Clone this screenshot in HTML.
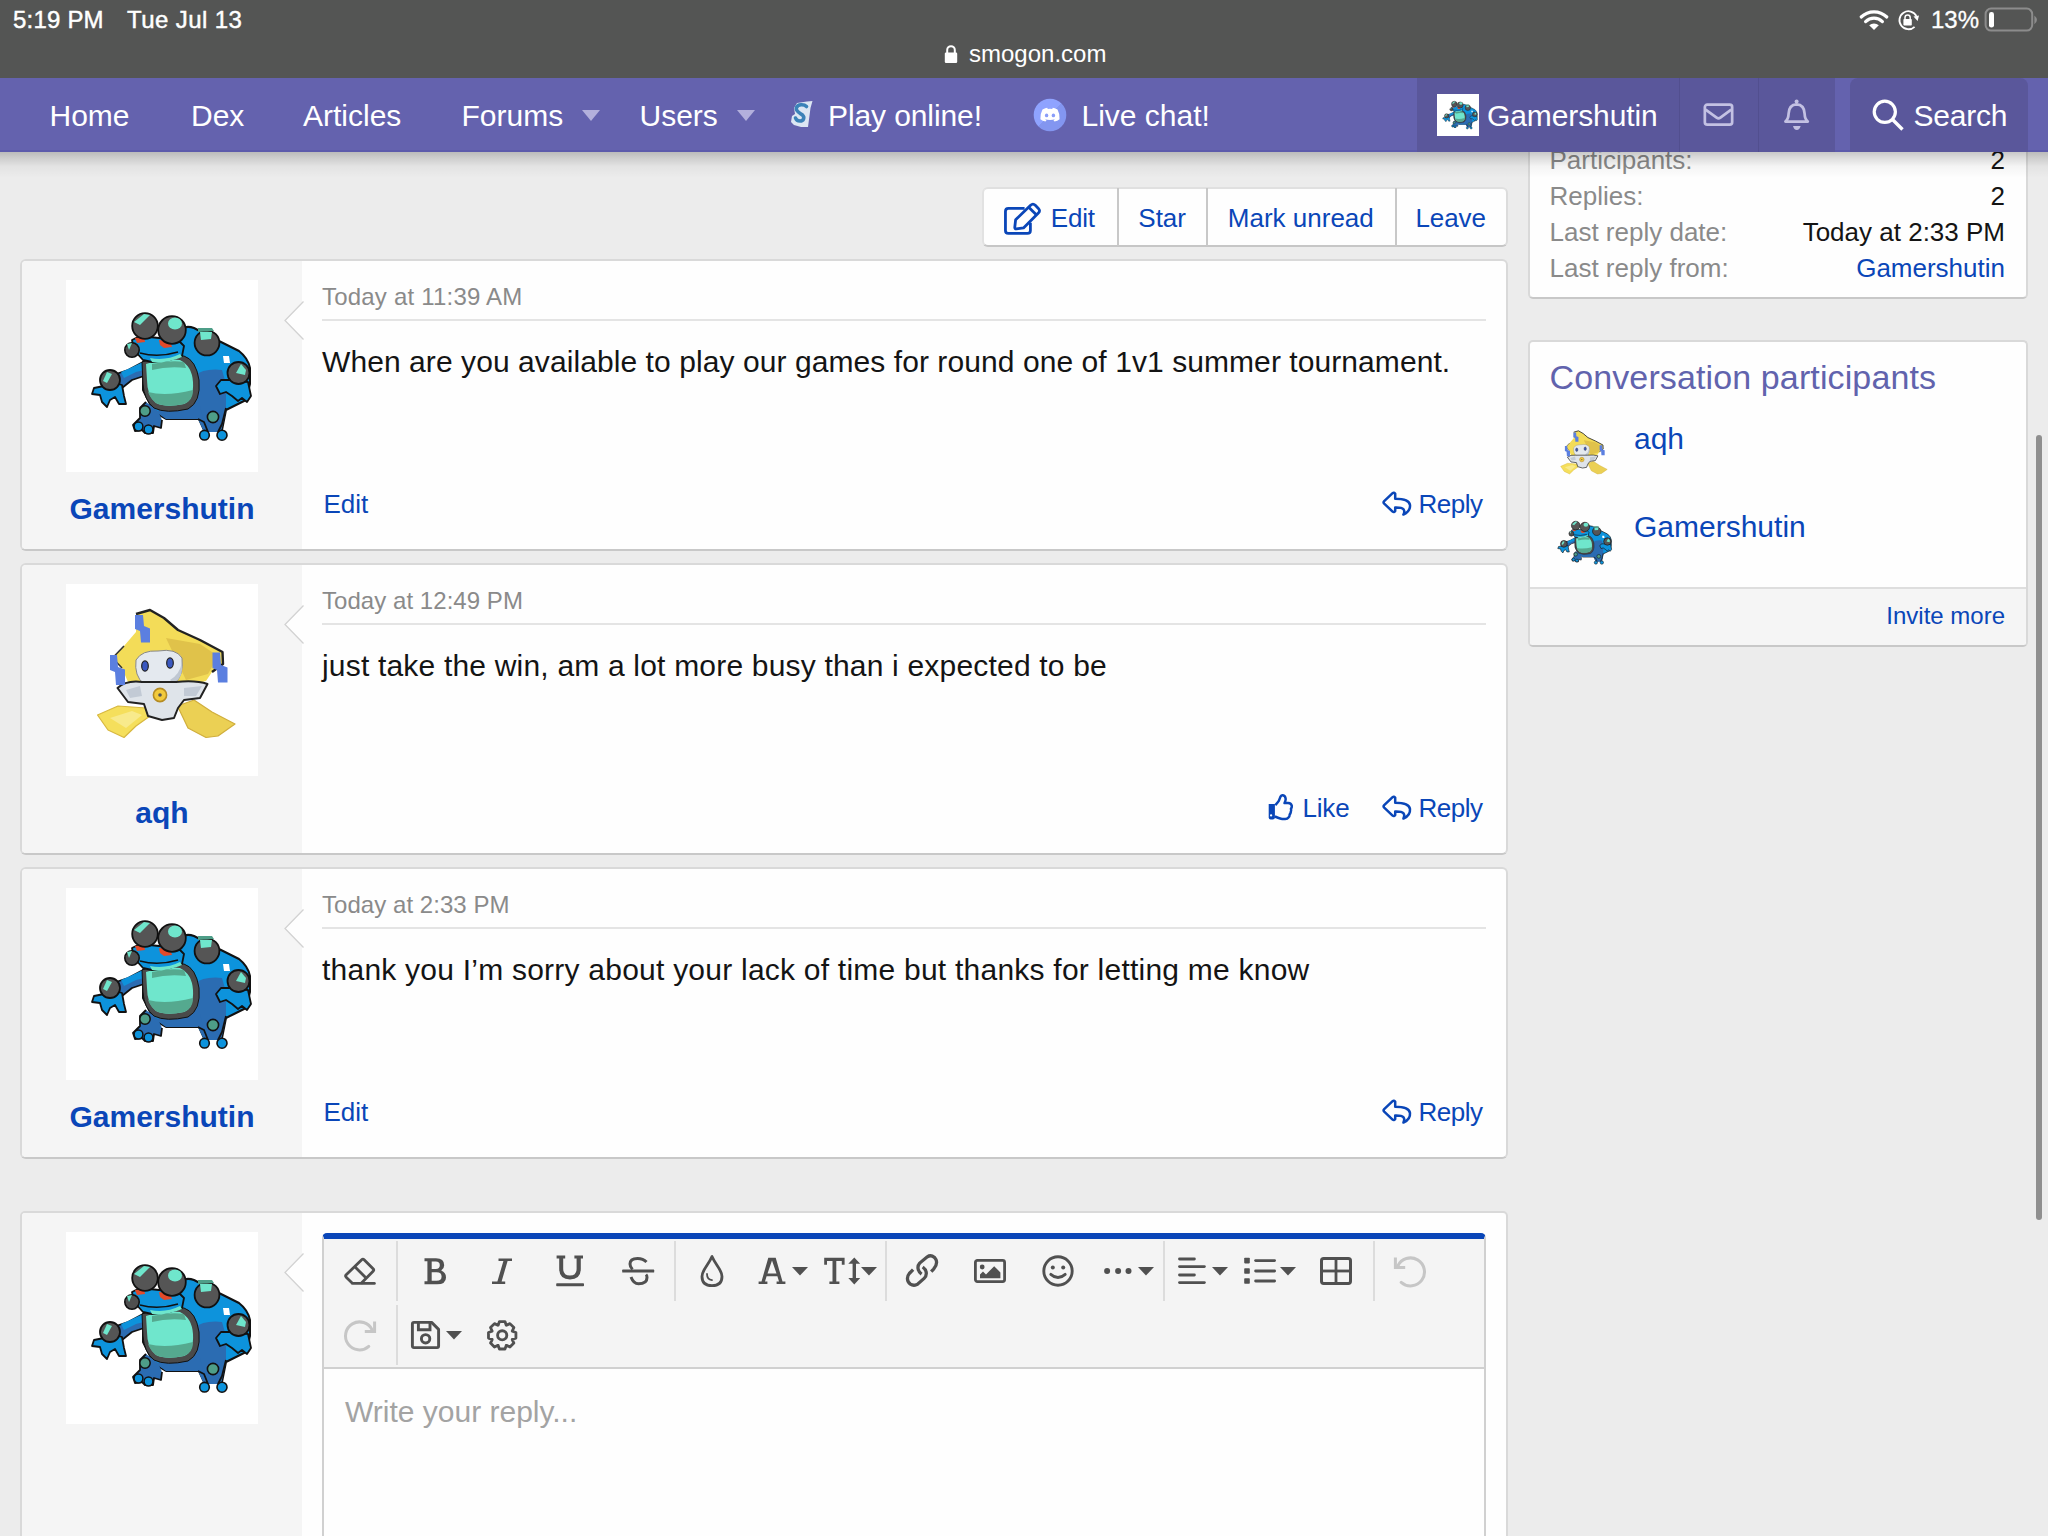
<!DOCTYPE html>
<html><head><meta charset="utf-8"><title>smogon.com</title>
<style>
html,body{margin:0;padding:0;}
body{width:2048px;height:1536px;overflow:hidden;position:relative;background:#ececec;font-family:"Liberation Sans",sans-serif;}
.t{position:absolute;line-height:1;white-space:nowrap;}
svg{overflow:visible}
</style></head><body>
<div style="position:absolute;left:982px;top:187px;width:526px;height:60px;background:#fefefe;border:2px solid #dcdcdc;border-top-color:#e0e0e0;border-left-color:#e2e2e2;border-bottom-color:#c6c6c6;border-radius:6px;box-sizing:border-box"></div>
<div style="position:absolute;left:1117px;top:188px;width:2px;height:58px;background:#c8c8c8"></div>
<div style="position:absolute;left:1206px;top:188px;width:2px;height:58px;background:#c8c8c8"></div>
<div style="position:absolute;left:1395px;top:188px;width:2px;height:58px;background:#c8c8c8"></div>
<svg style="position:absolute;left:1004px;top:203px;" width="37" height="33" viewBox="0 0 37 33"><path d="M20.6 5.4 H4.4 Q1.45 5.4 1.45 8.4 V27.4 Q1.45 30.4 4.4 30.4 H23.4 Q26.4 30.4 26.4 27.4 V19.8" fill="none" stroke="#0a46b8" stroke-width="2.8"/><path d="M11.6 16.8 L26.6 2.2 Q29 0 31.3 2.3 L34.4 5.4 Q36.7 7.8 34.4 10 L19.5 24.9 L12.4 25.9 Q10.6 26 10.8 24.1 Z" fill="none" stroke="#0a46b8" stroke-width="2.8" stroke-linejoin="round"/><path d="M24.7 4.2 L32.6 12.1" stroke="#0a46b8" stroke-width="2.8"/></svg>
<div class="t" style="left:1050.8px;top:205.0px;font-size:26px;color:#0a46b8;letter-spacing:-0.2px;">Edit</div>
<div class="t" style="left:1138.3px;top:205.0px;font-size:26px;color:#0a46b8;">Star</div>
<div class="t" style="left:1227.8px;top:205.0px;font-size:26px;color:#0a46b8;">Mark unread</div>
<div class="t" style="left:1415.5px;top:205.0px;font-size:26px;color:#0a46b8;letter-spacing:-0.1px;">Leave</div>
<div style="position:absolute;left:20px;top:259px;width:1488px;height:292px;background:#fefefe;border:2px solid #d9d9d9;border-bottom-color:#c8c8c8;border-radius:6px;box-sizing:border-box"></div>
<div style="position:absolute;left:22px;top:261px;width:280px;height:288px;background:#f5f5f5;border-radius:4px 0 0 4px"></div>
<div style="position:absolute;left:66px;top:280px;width:192px;height:192px;background:#fff"></div>
<svg style="position:absolute;left:66px;top:280px" width="192" height="192" viewBox="0 0 192 192"><use href="#toad"/></svg>
<div class="t" style="left:162px;transform:translateX(-50%);top:493.9px;font-size:30px;color:#0a46b8;font-weight:bold;">Gamershutin</div>
<svg style="position:absolute;left:284px;top:301px;" width="20" height="40" viewBox="0 0 20 40"><path d="M20 0 L1 19.5 L20 39 Z" fill="#fefefe"/><path d="M19.5 0.5 L1 19.5 L19.5 38.5" fill="none" stroke="#d2d2d2" stroke-width="1.3"/></svg>
<div class="t" style="left:322px;top:284.6px;font-size:24px;color:#8a8a8a;letter-spacing:0.2px;">Today at 11:39 AM</div>
<div style="position:absolute;left:322px;top:319px;width:1164px;height:2px;background:#e4e4e4"></div>
<div class="t" style="left:322px;top:347.4px;font-size:30px;color:#141414;letter-spacing:0.075px;">When are you available to play our games for round one of 1v1 summer tournament.</div>
<div class="t" style="left:323.5px;top:490.7px;font-size:26px;color:#0a46b8;">Edit</div>
<svg style="position:absolute;left:1382px;top:491px;" width="31" height="27" viewBox="0 0 31 27"><path d="M13.2 2.8 Q12 1 10.6 2.2 L2.2 10.2 Q1 11.4 2.2 12.6 L10.6 20.6 Q12 21.8 13.2 20 V16.6 Q19.6 16.4 21.6 18.4 Q23 20.6 21.4 23.6 Q28.6 20.2 28 14 Q27 7.8 13.2 7.8 Z" fill="none" stroke="#0a46b8" stroke-width="2.5" stroke-linejoin="round"/></svg>
<div class="t" style="left:1418.5px;top:490.7px;font-size:26px;color:#0a46b8;letter-spacing:-0.5px;">Reply</div>
<div style="position:absolute;left:20px;top:563px;width:1488px;height:292px;background:#fefefe;border:2px solid #d9d9d9;border-bottom-color:#c8c8c8;border-radius:6px;box-sizing:border-box"></div>
<div style="position:absolute;left:22px;top:565px;width:280px;height:288px;background:#f5f5f5;border-radius:4px 0 0 4px"></div>
<div style="position:absolute;left:66px;top:584px;width:192px;height:192px;background:#fff"></div>
<svg style="position:absolute;left:66px;top:584px" width="192" height="192" viewBox="0 0 192 192"><use href="#jira"/></svg>
<div class="t" style="left:162px;transform:translateX(-50%);top:797.9px;font-size:30px;color:#0a46b8;font-weight:bold;">aqh</div>
<svg style="position:absolute;left:284px;top:605px;" width="20" height="40" viewBox="0 0 20 40"><path d="M20 0 L1 19.5 L20 39 Z" fill="#fefefe"/><path d="M19.5 0.5 L1 19.5 L19.5 38.5" fill="none" stroke="#d2d2d2" stroke-width="1.3"/></svg>
<div class="t" style="left:322px;top:588.6px;font-size:24px;color:#8a8a8a;letter-spacing:0.05px;">Today at 12:49 PM</div>
<div style="position:absolute;left:322px;top:623px;width:1164px;height:2px;background:#e4e4e4"></div>
<div class="t" style="left:322px;top:651.4px;font-size:30px;color:#141414;letter-spacing:0.19px;">just take the win, am a lot more busy than i expected to be</div>
<svg style="position:absolute;left:1267px;top:794px;" width="27" height="28" viewBox="0 0 27 28"><path d="M1.7 10.1 H7.9 V23.4 Q7.9 25.4 5.8 25.4 H3.6 Q1.7 25.4 1.7 23.4 Z" fill="#0a46b8"/><circle cx="4.1" cy="21.4" r="1.15" fill="#fff"/><path d="M8.3 11.1 Q10.4 9 11.8 6.9 L13.5 2.6 Q14.4 1 15.8 1.2 Q18.4 1.6 18.7 5 Q18.6 7 17.5 9.1 H21.2 Q24.2 9.4 24.8 11.8 Q25 13.6 23.9 14.8 Q24.6 16.4 23.9 17.5 Q23.6 19.6 22.7 20.5 Q22.6 22.6 21.7 23.2 Q20.4 24.9 18.2 24.9 Q15.4 25 14 24.7 Q11 24 7.85 22.5" fill="none" stroke="#0a46b8" stroke-width="2.5" stroke-linejoin="round"/></svg>
<div class="t" style="left:1302.5px;top:794.7px;font-size:26px;color:#0a46b8;letter-spacing:-0.2px;">Like</div>
<svg style="position:absolute;left:1382px;top:795px;" width="31" height="27" viewBox="0 0 31 27"><path d="M13.2 2.8 Q12 1 10.6 2.2 L2.2 10.2 Q1 11.4 2.2 12.6 L10.6 20.6 Q12 21.8 13.2 20 V16.6 Q19.6 16.4 21.6 18.4 Q23 20.6 21.4 23.6 Q28.6 20.2 28 14 Q27 7.8 13.2 7.8 Z" fill="none" stroke="#0a46b8" stroke-width="2.5" stroke-linejoin="round"/></svg>
<div class="t" style="left:1418.5px;top:794.7px;font-size:26px;color:#0a46b8;letter-spacing:-0.5px;">Reply</div>
<div style="position:absolute;left:20px;top:867px;width:1488px;height:292px;background:#fefefe;border:2px solid #d9d9d9;border-bottom-color:#c8c8c8;border-radius:6px;box-sizing:border-box"></div>
<div style="position:absolute;left:22px;top:869px;width:280px;height:288px;background:#f5f5f5;border-radius:4px 0 0 4px"></div>
<div style="position:absolute;left:66px;top:888px;width:192px;height:192px;background:#fff"></div>
<svg style="position:absolute;left:66px;top:888px" width="192" height="192" viewBox="0 0 192 192"><use href="#toad"/></svg>
<div class="t" style="left:162px;transform:translateX(-50%);top:1101.9px;font-size:30px;color:#0a46b8;font-weight:bold;">Gamershutin</div>
<svg style="position:absolute;left:284px;top:909px;" width="20" height="40" viewBox="0 0 20 40"><path d="M20 0 L1 19.5 L20 39 Z" fill="#fefefe"/><path d="M19.5 0.5 L1 19.5 L19.5 38.5" fill="none" stroke="#d2d2d2" stroke-width="1.3"/></svg>
<div class="t" style="left:322px;top:892.6px;font-size:24px;color:#8a8a8a;letter-spacing:0.05px;">Today at 2:33 PM</div>
<div style="position:absolute;left:322px;top:927px;width:1164px;height:2px;background:#e4e4e4"></div>
<div class="t" style="left:322px;top:955.4px;font-size:30px;color:#141414;letter-spacing:0.23px;">thank you I&#8217;m sorry about your lack of time but thanks for letting me know</div>
<div class="t" style="left:323.5px;top:1098.7px;font-size:26px;color:#0a46b8;">Edit</div>
<svg style="position:absolute;left:1382px;top:1099px;" width="31" height="27" viewBox="0 0 31 27"><path d="M13.2 2.8 Q12 1 10.6 2.2 L2.2 10.2 Q1 11.4 2.2 12.6 L10.6 20.6 Q12 21.8 13.2 20 V16.6 Q19.6 16.4 21.6 18.4 Q23 20.6 21.4 23.6 Q28.6 20.2 28 14 Q27 7.8 13.2 7.8 Z" fill="none" stroke="#0a46b8" stroke-width="2.5" stroke-linejoin="round"/></svg>
<div class="t" style="left:1418.5px;top:1098.7px;font-size:26px;color:#0a46b8;letter-spacing:-0.5px;">Reply</div>
<div style="position:absolute;left:20px;top:1211px;width:1488px;height:400px;background:#fefefe;border:2px solid #d9d9d9;border-radius:5px;box-sizing:border-box"></div>
<div style="position:absolute;left:22px;top:1213px;width:280px;height:400px;background:#f5f5f5;border-radius:3px 0 0 0"></div>
<div style="position:absolute;left:66px;top:1232px;width:192px;height:192px;background:#fff"></div>
<svg style="position:absolute;left:66px;top:1232px" width="192" height="192" viewBox="0 0 192 192"><use href="#toad"/></svg>
<svg style="position:absolute;left:284px;top:1253px;" width="20" height="40" viewBox="0 0 20 40"><path d="M20 0 L1 19.5 L20 39 Z" fill="#fefefe"/><path d="M19.5 0.5 L1 19.5 L19.5 38.5" fill="none" stroke="#d2d2d2" stroke-width="1.3"/></svg>
<div style="position:absolute;left:322px;top:1233px;width:1164px;height:320px;background:#f4f4f4;border:2px solid #d0d0d0;border-top:6px solid #0a46b8;border-radius:5px 5px 0 0;box-sizing:border-box"></div>
<div style="position:absolute;left:324px;top:1369px;width:1160px;height:200px;background:#fefefe"></div>
<div style="position:absolute;left:324px;top:1367px;width:1160px;height:2px;background:#d0d0d0"></div>
<div style="position:absolute;left:396px;top:1241px;width:2px;height:60px;background:#dcdcdc"></div>
<div style="position:absolute;left:674px;top:1241px;width:2px;height:60px;background:#dcdcdc"></div>
<div style="position:absolute;left:885px;top:1241px;width:2px;height:60px;background:#dcdcdc"></div>
<div style="position:absolute;left:1163px;top:1241px;width:2px;height:60px;background:#dcdcdc"></div>
<div style="position:absolute;left:1373px;top:1241px;width:2px;height:60px;background:#dcdcdc"></div>
<div style="position:absolute;left:396px;top:1305px;width:2px;height:60px;background:#dcdcdc"></div>
<div class="t" style="left:345px;top:1396.9px;font-size:30px;color:#a3a3a3;">Write your reply...</div>
<svg style="position:absolute;left:343px;top:1256px;" width="34" height="30" viewBox="0 0 34 30"><path d="M9.6 27.4 L3.2 21.2 Q2 20 3.2 18.8 L18.7 3.7 Q19.9 2.5 21.1 3.7 L30.1 12.8 Q31.3 14 30.1 15.2 L18 27.4" fill="none" stroke="#505050" stroke-width="2.8" stroke-linejoin="round"/><path d="M9.6 27.4 H31.4" stroke="#505050" stroke-width="2.8" stroke-linecap="round"/><path d="M12.1 11 L22.6 21.5" stroke="#505050" stroke-width="2.8"/></svg>
<svg style="position:absolute;left:423px;top:1256px;" width="25" height="30" viewBox="0 0 25 30"><path d="M1.5 2.2 H13 Q21.2 2.2 21.2 9.2 Q21.2 12.6 18.2 14.5 Q23 16.4 23 21.4 Q23 28.2 14 28.2 H1.5 V25.2 H4.4 V5.2 H1.5 Z M8.7 5.6 V12.9 H12.8 Q16.8 12.9 16.8 9.2 Q16.8 5.6 12.8 5.6 Z M8.7 16.2 V24.8 H13.6 Q18.6 24.8 18.6 20.5 Q18.6 16.2 13.6 16.2 Z" fill="#505050" fill-rule="evenodd"/></svg>
<svg style="position:absolute;left:491px;top:1256px;" width="23" height="30" viewBox="0 0 23 30"><path d="M7.5 2.4 H21 V5 H16.6 L10.6 25.4 H14.2 V28 H1 V25.4 H6.4 L12.4 5 H7.5 Z" fill="#505050"/></svg>
<svg style="position:absolute;left:555px;top:1254px;" width="31" height="34" viewBox="0 0 31 34"><path d="M1.6 1.6 H10.2 V4.4 H8.2 V14.8 Q8.2 21.6 15 21.6 Q21.6 21.6 21.6 14.8 V4.4 H19.4 V1.6 H28 V4.4 H25.8 V14.8 Q25.8 25.4 15 25.4 Q4.2 25.4 4.2 14.8 V4.4 H1.6 Z" fill="#505050"/><rect x="1.2" y="29.2" width="27.8" height="3" rx="0.8" fill="#505050"/></svg>
<svg style="position:absolute;left:621px;top:1256px;" width="34" height="30" viewBox="0 0 34 30"><path d="M25.5 6 Q22 2.4 16.6 2.4 Q9 2.4 9 8 Q9 11 11.5 13.5" fill="none" stroke="#505050" stroke-width="3"/><path d="M10 21 Q12.5 27.8 17.5 27.8 Q26 27.8 26 21.5 Q26 19.5 25 18.5" fill="none" stroke="#505050" stroke-width="3"/><rect x="1.2" y="13.6" width="32" height="3" rx="0.6" fill="#505050"/></svg>
<svg style="position:absolute;left:700px;top:1254px;" width="24" height="34" viewBox="0 0 24 34"><path d="M12 2.5 Q10.5 6 7 11.2 Q2 18.5 2 22.4 Q2 31.6 12 31.6 Q22 31.6 22 22.4 Q22 18.5 17 11.2 Q13.5 6 12 2.5 Z" fill="none" stroke="#505050" stroke-width="2.8" stroke-linejoin="round"/><path d="M7 20 Q7 25.5 12 26.2" fill="none" stroke="#505050" stroke-width="1.8" stroke-linecap="round"/></svg>
<svg style="position:absolute;left:757px;top:1256px;" width="30" height="30" viewBox="0 0 30 30"><path d="M11.3 1.8 H18.7 L25.5 25.4 H28.4 V28 H19.6 V25.4 H22 L20.4 20.3 H9.6 L8 25.4 H10.4 V28 H1.6 V25.4 H4.5 Z M10.5 17.5 H19.5 L15 4.6 Z" fill="#505050" fill-rule="evenodd"/></svg>
<svg style="position:absolute;left:792px;top:1266.5px;" width="16" height="8.5" viewBox="0 0 16 8.5"><path d="M0 0 H16 L8.0 8.5 Z" fill="#505050"/></svg>
<svg style="position:absolute;left:823px;top:1256px;" width="38" height="30" viewBox="0 0 38 30"><path d="M1.2 1.8 H21.6 V8.8 H18.8 V5 H13.3 V25.4 H16.4 V28 H6.4 V25.4 H9.5 V5 H4 V8.8 H1.2 Z" fill="#505050"/><path d="M25.3 7.8 L31.3 1.6 L37.2 7.8 H33 V22 H37.2 L31.3 28.4 L25.3 22 H29.6 V7.8 Z" fill="#505050"/></svg>
<svg style="position:absolute;left:860.5px;top:1266.5px;" width="16" height="8.5" viewBox="0 0 16 8.5"><path d="M0 0 H16 L8.0 8.5 Z" fill="#505050"/></svg>
<svg style="position:absolute;left:905px;top:1254px;" width="34" height="34" viewBox="0 0 34 34"><path d="M16.6 20.1 C13 17.6 11.6 12.6 14.7 9.1 L22.3 2.8 C25.6 0.6 29.6 2.2 31 5.6 C32.2 8.6 31 12.4 28.6 15.1 L26.2 17.6" fill="none" stroke="#505050" stroke-width="3.3"/><path d="M8.1 15.7 L4.3 19.5 C1.6 22.6 1.8 27.6 5.4 30.2 C8.4 32.2 12.2 31.2 14.1 28.8 L19.1 24.4 C22.4 21.2 22 16 17.7 13" fill="none" stroke="#505050" stroke-width="3.3"/></svg>
<svg style="position:absolute;left:973px;top:1258px;" width="34" height="26" viewBox="0 0 34 26"><rect x="2.4" y="2.4" width="29.2" height="21.2" rx="2" fill="none" stroke="#505050" stroke-width="2.8"/><circle cx="9.2" cy="9" r="2.4" fill="#505050"/><path d="M7 20.2 V16.4 L10 13.4 L13 16.4 L21.2 8.2 L27.4 14.4 V20.2 Z" fill="#505050"/></svg>
<svg style="position:absolute;left:1041px;top:1254px;" width="34" height="34" viewBox="0 0 34 34"><circle cx="17" cy="17" r="14.2" fill="none" stroke="#505050" stroke-width="2.9"/><circle cx="11.8" cy="13.4" r="2" fill="#505050"/><circle cx="22.2" cy="13.4" r="2" fill="#505050"/><path d="M9.8 20.4 Q17 26.8 24.2 20.4" fill="none" stroke="#505050" stroke-width="2.9" stroke-linecap="round"/></svg>
<svg style="position:absolute;left:1103px;top:1267px;" width="30" height="8" viewBox="0 0 30 8"><circle cx="4.1" cy="4" r="3" fill="#505050"/><circle cx="15.1" cy="4" r="3" fill="#505050"/><circle cx="25.5" cy="4" r="3" fill="#505050"/></svg>
<svg style="position:absolute;left:1138px;top:1266.6px;" width="16" height="8.5" viewBox="0 0 16 8.5"><path d="M0 0 H16 L8.0 8.5 Z" fill="#505050"/></svg>
<svg style="position:absolute;left:1177px;top:1256px;" width="30" height="30" viewBox="0 0 30 30"><rect x="1.1" y="1.6" width="17.7" height="2.8" rx="1.4" fill="#505050"/><rect x="1.1" y="9.2" width="27.7" height="2.8" rx="1.4" fill="#505050"/><rect x="1.1" y="17.6" width="17.7" height="2.8" rx="1.4" fill="#505050"/><rect x="1.1" y="25.2" width="27.7" height="2.8" rx="1.4" fill="#505050"/></svg>
<svg style="position:absolute;left:1212px;top:1266.6px;" width="16" height="8.5" viewBox="0 0 16 8.5"><path d="M0 0 H16 L8.0 8.5 Z" fill="#505050"/></svg>
<svg style="position:absolute;left:1243px;top:1256px;" width="34" height="30" viewBox="0 0 34 30"><rect x="1.2" y="1.7999999999999998" width="5.6" height="5.6" rx="0.8" fill="#505050"/><rect x="11.2" y="3.1999999999999997" width="21.8" height="2.8" rx="1.4" fill="#505050"/><rect x="1.2" y="12.2" width="5.6" height="5.6" rx="0.8" fill="#505050"/><rect x="11.2" y="13.6" width="21.8" height="2.8" rx="1.4" fill="#505050"/><rect x="1.2" y="22.2" width="5.6" height="5.6" rx="0.8" fill="#505050"/><rect x="11.2" y="23.6" width="21.8" height="2.8" rx="1.4" fill="#505050"/></svg>
<svg style="position:absolute;left:1280.3px;top:1266.6px;" width="16" height="8.5" viewBox="0 0 16 8.5"><path d="M0 0 H16 L8.0 8.5 Z" fill="#505050"/></svg>
<svg style="position:absolute;left:1319px;top:1256px;" width="34" height="30" viewBox="0 0 34 30"><rect x="2.5" y="2.5" width="29" height="25" rx="2.2" fill="none" stroke="#505050" stroke-width="3"/><rect x="15.6" y="2.5" width="2.8" height="25" fill="#505050"/><rect x="2.5" y="13.6" width="29" height="2.8" fill="#505050"/></svg>
<svg style="position:absolute;left:1392px;top:1254px;" width="34" height="34" viewBox="0 0 34 34"><path d="M5.8 12 A14 14 0 1 1 9.2 28.4" fill="none" stroke="#c6c6c6" stroke-width="3" stroke-linecap="round"/><path d="M3.4 3.5 V13.4 H13.2" fill="none" stroke="#c6c6c6" stroke-width="3"/></svg>
<svg style="position:absolute;left:344px;top:1318px;" width="34" height="34" viewBox="0 0 34 34"><path d="M28.2 12 A14 14 0 1 0 24.8 28.4" fill="none" stroke="#c6c6c6" stroke-width="3" stroke-linecap="round"/><path d="M30.6 3.5 V13.4 H20.8" fill="none" stroke="#c6c6c6" stroke-width="3"/></svg>
<svg style="position:absolute;left:411px;top:1320px;" width="30" height="30" viewBox="0 0 30 30"><path d="M3 2.4 H20.6 L27.6 9.4 V26 Q27.6 27.6 26 27.6 H3 Q1.4 27.6 1.4 26 V4 Q1.4 2.4 3 2.4 Z" fill="none" stroke="#505050" stroke-width="2.9" stroke-linejoin="round"/><path d="M7.4 2.6 V9.8 H19 V2.6" fill="none" stroke="#505050" stroke-width="2.9"/><circle cx="14.6" cy="18.8" r="4.2" fill="none" stroke="#505050" stroke-width="2.9"/></svg>
<svg style="position:absolute;left:446px;top:1330.6px;" width="16" height="8.4" viewBox="0 0 16 8.4"><path d="M0 0 H16 L8.0 8.4 Z" fill="#505050"/></svg>
<svg style="position:absolute;left:487px;top:1320px;" width="31" height="31" viewBox="0 0 31 31"><path d="M28.92 12.52 L28.92 18.08 L25.32 19.34 L25.22 19.60 L26.87 23.04 L22.94 26.97 L19.50 25.32 L19.24 25.42 L17.98 29.02 L12.42 29.02 L11.16 25.42 L10.90 25.32 L7.46 26.97 L3.53 23.04 L5.18 19.60 L5.08 19.34 L1.48 18.08 L1.48 12.52 L5.08 11.26 L5.18 11.00 L3.53 7.56 L7.46 3.63 L10.90 5.28 L11.16 5.18 L12.42 1.58 L17.98 1.58 L19.24 5.18 L19.50 5.28 L22.94 3.63 L26.87 7.56 L25.22 11.00 L25.32 11.26 Z" fill="none" stroke="#505050" stroke-width="2.8" stroke-linejoin="round"/><circle cx="15.2" cy="15.3" r="4.6" fill="none" stroke="#505050" stroke-width="2.9"/></svg>
<div style="position:absolute;left:1528px;top:100px;width:500px;height:199px;background:#fefefe;border:2px solid #d9d9d9;border-bottom-color:#c8c8c8;border-radius:5px;box-sizing:border-box"></div>
<div class="t" style="left:1549.5px;top:147.0px;font-size:26px;color:#8a8a8a;">Participants:</div>
<div class="t" style="right:43px;top:147.0px;font-size:26px;color:#141414;">2</div>
<div class="t" style="left:1549.5px;top:183.0px;font-size:26px;color:#8a8a8a;">Replies:</div>
<div class="t" style="right:43px;top:183.0px;font-size:26px;color:#141414;">2</div>
<div class="t" style="left:1549.5px;top:219.0px;font-size:26px;color:#8a8a8a;">Last reply date:</div>
<div class="t" style="right:43px;top:219.0px;font-size:26px;color:#141414;">Today at 2:33 PM</div>
<div class="t" style="left:1549.5px;top:255.0px;font-size:26px;color:#8a8a8a;">Last reply from:</div>
<div class="t" style="right:43px;top:255.0px;font-size:26px;color:#0a46b8;">Gamershutin</div>
<div style="position:absolute;left:1528px;top:340px;width:500px;height:307px;background:#fefefe;border:2px solid #d9d9d9;border-bottom-color:#c8c8c8;border-radius:5px;box-sizing:border-box"></div>
<div style="position:absolute;left:1530px;top:587px;width:496px;height:58px;background:#f5f5f5;border-top:2px solid #dedede;box-sizing:border-box;border-radius:0 0 4px 4px"></div>
<div class="t" style="left:1549.5px;top:359.6px;font-size:34px;color:#6163ad;letter-spacing:0.12px;">Conversation participants</div>
<svg style="position:absolute;left:1550px;top:422px" width="65" height="65" viewBox="0 0 192 192"><use href="#jira"/></svg>
<div class="t" style="left:1634px;top:423.8px;font-size:30px;color:#0a46b8;">aqh</div>
<svg style="position:absolute;left:1548.6px;top:510px" width="65" height="65" viewBox="0 0 192 192"><use href="#toad"/></svg>
<div class="t" style="left:1634px;top:512.3px;font-size:30px;color:#0a46b8;">Gamershutin</div>
<div class="t" style="right:43px;top:603.7px;font-size:24px;color:#0a46b8;">Invite more</div>
<div style="position:absolute;left:2036px;top:435px;width:6px;height:785px;background:#8f8f8f;border-radius:3px"></div>
<svg width="0" height="0" style="position:absolute"><defs>
<g id="toad" stroke-linejoin="round">
 <!-- body right/back (light blue) -->
 <path d="M112 50 Q120 45 128 48 L153 61 L173 71 Q182 78 184 88 L184 104 L180 120 L168 126 L160 130 L156 150 L138 150 L133 139 L100 139 L88 132 L77 110 L77 82 L100 78 Z" fill="#0d93dc" stroke="#111" stroke-width="2"/>
 <!-- darker lower body -->
 <path d="M128 96 Q138 88 156 90 L160 104 L160 130 L155 152 L138 152 L132 139 L100 139 L90 132 L96 128 Q124 128 128 110 Z" fill="#2b6cb2"/>
 <!-- right hand fingers -->
 <path d="M150 106 L155 100 L168 100 L182 102 L185 116 L181 122 L176 118 L172 121 L166 116 L160 112 L154 114 Z" fill="#0d93dc" stroke="#111" stroke-width="1.8"/>
 <!-- left arm -->
 <path d="M77 82 L62 90 L50 94 L48 106 L56 108 L66 100 L78 96 Z" fill="#2b6cb2" stroke="#111" stroke-width="1.8"/>
 <path d="M77 82 L62 89 L55 92 L58 98 L70 92 L78 90 Z" fill="#0d93dc"/>
 <!-- left hand fingers -->
 <path d="M38 106 L28 108 L26 114 L34 115 L36 122 L41 127 L44 120 L49 117 L53 124 L60 124 L58 116 L56 105 L46 102 Z" fill="#0d93dc" stroke="#111" stroke-width="1.8"/>
 <!-- left leg + foot -->
 <path d="M80 122 L92 131 L96 140 L95 148 L88 146 L87 153 L79 153 L76 150 L69 151 L67 145 L74 138 L74 128 Z" fill="#2b6cb2"/><path d="M96 140 L95 148 L88 146 L87 153 L79 153 L76 150 L69 151 L67 145 L74 138 L74 128 L80 122" fill="none" stroke="#111" stroke-width="1.8"/>
 <circle cx="72.5" cy="146.5" r="4.4" fill="#0d93dc" stroke="#111" stroke-width="1.5"/>
 <circle cx="82.5" cy="149.5" r="4.4" fill="#0d93dc" stroke="#111" stroke-width="1.5"/>
 <circle cx="79" cy="131" r="5.2" fill="#4e9e88" stroke="#111" stroke-width="1.5"/>
 <!-- right leg + foot -->
 <path d="M134 126 L160 126 L156 144 L152 152 L142 152 L138 142 Z" fill="#2b6cb2"/><path d="M132 139 L138 142 L142 152 M160 128 L156 144 L152 152" fill="none" stroke="#111" stroke-width="1.8"/>
 <circle cx="138.5" cy="155.2" r="4.8" fill="#0d93dc" stroke="#111" stroke-width="1.6"/>
 <circle cx="156" cy="155.2" r="5" fill="#0d93dc" stroke="#111" stroke-width="1.6"/>
 <circle cx="147" cy="137" r="5.6" fill="#4e9e88" stroke="#111" stroke-width="1.6"/>
 <!-- belly -->
 <path d="M76 82 Q96 74 118 76 Q130 80 133 100 Q135 122 122 129 Q100 134 88 128 Q78 120 77 104 Z" fill="#4a4a4a" stroke="#111" stroke-width="1"/>
 <path d="M80 84 Q98 78 114 80 Q126 86 127 102 Q128 120 118 124 Q100 128 90 123 Q81 116 81 100 Z" fill="#6fe6cc"/>
 <path d="M82 112 Q100 117 127 110 Q127 121 118 124 Q100 128 90 123 Q84 118 82 112 Z" fill="#55a98f"/>
 <path d="M86 84 Q104 80 118 82 L120 88 Q102 86 86 90 Z" fill="#55a98f"/>
 <!-- head -->
 <path d="M66 60 L74 56 L112 60 L118 66 L116 76 L104 80 L86 82 L77 80 L68 70 Z" fill="#0d93dc" stroke="#111" stroke-width="1.8"/>
 <path d="M74 73 Q92 78 112 72" fill="none" stroke="#111" stroke-width="1.6"/>
 <path d="M84 78 Q100 81 114 74 L116 77 Q100 84 86 82 Z" fill="#6fe6cc"/>
 <path d="M69 58 L78 57 L79 62 L71 63 Z" fill="#e24a2a"/>
 <path d="M93 60 L104 61 L106 67 L98 68 L94 65 Z" fill="#e24a2a"/>
 <!-- bumps -->
 <circle cx="66" cy="70" r="7.2" fill="#4f4f4f" stroke="#111" stroke-width="1.6"/>
 <path d="M61 64 L66 63 L63 70 Z" fill="#6fe6cc"/>
 <circle cx="79" cy="46" r="12.8" fill="#555" stroke="#111" stroke-width="1.8"/>
 <path d="M68 42 L78 34 L84 35 L74 45 Z" fill="#6fe6cc"/>
 <circle cx="106" cy="50" r="13.8" fill="#555" stroke="#111" stroke-width="1.8"/>
 <ellipse cx="109" cy="43.5" rx="7" ry="6" fill="#6fe6cc"/>
 <circle cx="141" cy="63" r="12.4" fill="#555" stroke="#111" stroke-width="1.8"/>
 <path d="M134 52 L146 52 L145 59 L135 60 Z" fill="#6fe6cc"/>
 <path d="M132 48 L146 48 L148 51 L132 52 Z" fill="#4e9e88"/>
 <circle cx="172.5" cy="93" r="11" fill="#555" stroke="#111" stroke-width="1.8"/>
 <path d="M170 93 L175 84 L180 90 L179 95 Z" fill="#6fe6cc"/>
 <circle cx="44" cy="100" r="10" fill="#555" stroke="#111" stroke-width="1.8"/>
 <path d="M37 101 L41 92 L46 94 L41 103 Z" fill="#6fe6cc"/>
 <path d="M157 76 L163 76 L164 83 L158 83 Z" fill="#fff"/>
</g>
<g id="jira" stroke-linejoin="round">
 <!-- tails -->
 <path d="M31.5 131 L52 122 L80 124 L84 132 L70 142 L58 153.5 L42 146 Z" fill="#f5df5c" stroke="#d8b840" stroke-width="1.2"/>
 <path d="M44 134 L66 127 L76 131 L60 144 Z" fill="#f8ea8c"/>
 <path d="M111.5 122 L128 116 L146 128 L169 140 L152 152 L140 153.5 L122 144 Z" fill="#ebd054" stroke="#d0ae3c" stroke-width="1.2"/>
 <!-- star head -->
 <path d="M70 30 L84 26 L98 34 L112 46 L134 56 L156.5 68 L157 80 L146 88 L140 97 L120 102 L80 102 L62 98 L56 84 L46.5 74 L58 62 L70 48 Z" fill="#f3dc58"/>
 <path d="M70 30 L84 26 L98 34 L112 46 L134 56 L156.5 68 L157 80 L146 88" fill="none" stroke="#222" stroke-width="2.4"/>
 <path d="M58 62 L46.5 74 L56 84" fill="none" stroke="#333" stroke-width="1.6"/>
 <path d="M100 54 L134 60 L152 72 L142 90 L120 96 Z" fill="#e0c24a"/>
 <!-- face -->
 <path d="M70 76 Q76 66 92 67 Q110 64 116 74 Q118 92 108 100 Q92 106 78 100 Q68 92 70 76 Z" fill="#e4e9ef" stroke="#888" stroke-width="1"/>
 <path d="M104 96 Q114 90 116 78 Q118 92 108 100 Z" fill="#bfc7d2"/>
 <ellipse cx="79" cy="82" rx="3.3" ry="5.2" fill="#3a58c0" stroke="#222" stroke-width="1.2"/>
 <ellipse cx="104" cy="79" rx="3.3" ry="5.2" fill="#3a58c0" stroke="#222" stroke-width="1.2"/>
 <!-- arms / body -->
 <path d="M51.5 104 Q60 96 76 98 L110 98 Q130 96 141.5 100 L134 114 L118 116 L112 124 L108 134 L96 136 L82 132 L78 120 L62 118 Z" fill="#dfe4ea" stroke="#222" stroke-width="2"/>
 <path d="M60 106 L74 102 L76 112 L64 114 Z M118 104 L136 102 L130 112 L118 112 Z" fill="#c2cad5"/>
 <circle cx="94" cy="111" r="6.6" fill="#f2ca3c" stroke="#b58c24" stroke-width="1.6"/>
 <circle cx="94" cy="111" r="1.8" fill="#555"/>
 <!-- tags -->
 <path d="M69 31 L77 31 L78 42 L84 44.5 L84 58.5 L75 58.5 L74 47 L69 45 Z" fill="#5b7fe0"/>
 <path d="M44 71 L51 71 L52 83 L59 85.5 L59 101 L50 101 L49 88 L44 86 Z" fill="#5b7fe0"/>
 <path d="M146.5 68.5 L154 68.5 L155 81 L161.5 83.5 L161.5 98.5 L152 98.5 L151 86 L146.5 84 Z" fill="#5b7fe0"/>
</g></defs></svg>
<div style="position:absolute;left:0px;top:0px;width:2048px;height:78px;background:#545554"></div>
<div class="t" style="left:13px;top:8.0px;font-size:24px;color:#fff;letter-spacing:0.2px;-webkit-text-stroke:0.45px #fff;">5:19 PM</div>
<div class="t" style="left:127px;top:8.0px;font-size:24px;color:#fff;letter-spacing:0.4px;-webkit-text-stroke:0.45px #fff;">Tue Jul 13</div>
<div class="t" style="left:969px;top:41.7px;font-size:24px;color:#fff;">smogon.com</div>
<svg style="position:absolute;left:944px;top:44px;" width="14" height="20" viewBox="0 0 14 20"><path d="M3.2 9 V6 A3.8 3.8 0 0 1 10.8 6 V9" fill="none" stroke="#fff" stroke-width="2"/><rect x="0.8" y="8.6" width="12.4" height="10.4" rx="1.2" fill="#fff"/></svg>
<div class="t" style="left:1931px;top:7.7px;font-size:24px;color:#fff;-webkit-text-stroke:0.3px #fff;">13%</div>
<svg style="position:absolute;left:1859px;top:9px;" width="30" height="22" viewBox="0 0 30 22"><path d="M15 21 L10.2 16.3 A7 7 0 0 1 19.8 16.3 Z" fill="#fff"/><path d="M6.6 12.6 A12 12 0 0 1 23.4 12.6" fill="none" stroke="#fff" stroke-width="3.2" stroke-linecap="round"/><path d="M2.2 8 A18.5 18.5 0 0 1 27.8 8" fill="none" stroke="#fff" stroke-width="3.2" stroke-linecap="round"/></svg>
<svg style="position:absolute;left:1897px;top:9px;" width="24" height="22" viewBox="0 0 24 22"><path d="M17.6 17.8 A9 9 0 1 1 19.4 7" fill="none" stroke="#fff" stroke-width="1.8"/><path d="M16.5 7.5 L22 6.5 L20.6 12 Z" fill="#fff"/><rect x="6.4" y="10" width="8.4" height="6.6" rx="0.8" fill="#fff"/><path d="M8 10.4 V8.6 A2.6 2.6 0 0 1 13.2 8.6 V10.4" fill="none" stroke="#fff" stroke-width="1.5"/></svg>
<svg style="position:absolute;left:1984px;top:7px;" width="56" height="26" viewBox="0 0 56 26"><rect x="1.6" y="1.6" width="46.6" height="22" rx="5.5" fill="none" stroke="#8c8c8c" stroke-width="2"/><rect x="5" y="5" width="5" height="15.6" rx="2.4" fill="#fff"/><path d="M50.4 8.4 Q55.4 12.8 50.4 17.2 Z" fill="#8c8c8c"/></svg>
<div style="position:absolute;left:0px;top:78px;width:2048px;height:74px;background:#6462ae"></div>
<div style="position:absolute;left:0px;top:150px;width:2048px;height:2px;background:#5c5aab"></div>
<div style="position:absolute;left:1417px;top:78px;width:418px;height:74px;background:#5a579b"></div>
<div style="position:absolute;left:1679px;top:78px;width:1px;height:74px;background:#524f8f"></div>
<div style="position:absolute;left:1758px;top:78px;width:1px;height:74px;background:#524f8f"></div>
<div style="position:absolute;left:1850px;top:78px;width:178px;height:74px;background:#5a579b;border-radius:8px 8px 0 0"></div>
<div style="position:absolute;left:0px;top:152px;width:2048px;height:26px;background:linear-gradient(rgba(0,0,0,.21),rgba(0,0,0,.14) 20%,rgba(0,0,0,.04) 55%,rgba(0,0,0,0))"></div>
<div class="t" style="left:49.5px;top:100.6px;font-size:30px;color:#fff;">Home</div>
<div class="t" style="left:191px;top:100.6px;font-size:30px;color:#fff;">Dex</div>
<div class="t" style="left:303px;top:100.6px;font-size:30px;color:#fff;">Articles</div>
<div class="t" style="left:461.5px;top:100.6px;font-size:30px;color:#fff;">Forums</div>
<svg style="position:absolute;left:582px;top:110px;" width="18" height="11" viewBox="0 0 18 11"><path d="M0 0 H18 L9 11 Z" fill="#b3b0dc"/></svg>
<div class="t" style="left:639.5px;top:100.6px;font-size:30px;color:#fff;">Users</div>
<svg style="position:absolute;left:737px;top:110px;" width="18" height="11" viewBox="0 0 18 11"><path d="M0 0 H18 L9 11 Z" fill="#b3b0dc"/></svg>
<svg style="position:absolute;left:790px;top:100px;" width="24" height="28" viewBox="0 0 24 28"><path d="M7 3 L17 1.5 L22.5 1 L20.5 8 L18 27 L11 27 L4 25 L1 22 L2 16 L5 14 L4 8 Z" fill="#dce6f3"/><path d="M16.5 6.5 C14 4 8 4 6.5 7.5 C5 11 10 13 12.5 15 C15 17.5 13.5 21 10 21 C7.5 21 6 19.5 5.5 18" fill="none" stroke="#3b82b8" stroke-width="3.6" stroke-linecap="round"/></svg>
<div class="t" style="left:828px;top:100.6px;font-size:30px;color:#fff;letter-spacing:-0.1px;">Play online!</div>
<svg style="position:absolute;left:1033px;top:98px;" width="34" height="34" viewBox="0 0 34 34"><defs><linearGradient id="dg" x1="0" y1="0" x2="1" y2="1"><stop offset="0.5" stop-color="#8fa3ff"/><stop offset="0.5" stop-color="#8396f0"/></linearGradient></defs><circle cx="17" cy="17" r="16.3" fill="url(#dg)"/><path d="M9.5 11.5 Q12.5 9.8 14.2 9.8 L14.8 11 Q17 10.6 19.2 11 L19.8 9.8 Q21.5 9.8 24.5 11.5 Q27 16 26.6 21.3 Q24.5 23.2 21.5 23.6 L20.4 22 Q22 21.4 22.6 20.8 Q17 23.3 11.4 20.8 Q12 21.4 13.6 22 L12.5 23.6 Q9.5 23.2 7.4 21.3 Q7 16 9.5 11.5 Z" fill="#fff"/><ellipse cx="13.6" cy="17.4" rx="1.7" ry="1.9" fill="#8a9df9"/><ellipse cx="20.4" cy="17.4" rx="1.7" ry="1.9" fill="#8a9df9"/></svg>
<div class="t" style="left:1081.5px;top:100.6px;font-size:30px;color:#fff;">Live chat!</div>
<div style="position:absolute;left:1437px;top:94px;width:42px;height:42px;background:#fff"></div>
<svg style="position:absolute;left:1437px;top:94px" width="42" height="42" viewBox="0 0 192 192"><use href="#toad"/></svg>
<div class="t" style="left:1487px;top:100.6px;font-size:30px;color:#fff;letter-spacing:-0.1px;">Gamershutin</div>
<svg style="position:absolute;left:1702px;top:102px;" width="33" height="25" viewBox="0 0 33 25"><rect x="2.85" y="2.65" width="27.3" height="19.9" rx="2.4" fill="none" stroke="#c3c1e3" stroke-width="2.7"/><path d="M3.6 7.6 L14.6 15.6 Q16.5 17 18.4 15.6 L29.2 7.6" fill="none" stroke="#c3c1e3" stroke-width="2.7" stroke-linejoin="round"/></svg>
<svg style="position:absolute;left:1782px;top:98px;" width="30" height="33" viewBox="0 0 30 33"><path d="M3.4 23.6 Q6.4 21 6.6 15.6 Q7 6.8 14.6 6.4 Q22.2 6.8 22.6 15.6 Q22.8 21 25.8 23.6 Z" fill="none" stroke="#c3c1e3" stroke-width="2.7" stroke-linejoin="round"/><circle cx="14.6" cy="3.6" r="2" fill="#c3c1e3"/><path d="M11 27.9 H18.6 Q17.6 31.9 14.8 31.9 Q12 31.9 11 27.9 Z" fill="#c3c1e3"/></svg>
<svg style="position:absolute;left:1872px;top:99px;" width="33" height="32" viewBox="0 0 33 32"><circle cx="12.8" cy="12.8" r="10.6" fill="none" stroke="#fff" stroke-width="3.2"/><path d="M20.5 20.5 L30.5 30.5" stroke="#fff" stroke-width="3.4" stroke-linecap="butt"/></svg>
<div class="t" style="left:1913.5px;top:100.6px;font-size:30px;color:#fff;letter-spacing:-0.2px;">Search</div>
</body></html>
